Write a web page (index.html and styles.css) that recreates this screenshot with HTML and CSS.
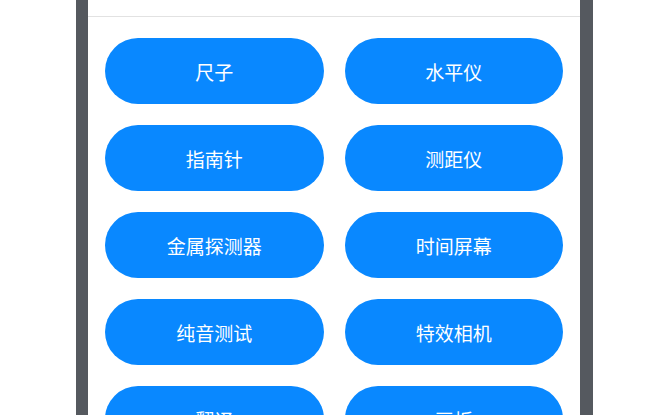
FILE: index.html
```html
<!DOCTYPE html>
<html lang="zh-CN">
    <head>
        <meta charset="UTF-8" />
        <meta name="viewport" content="width=device-width, initial-scale=1.0" />
        <title>工具箱</title>
        <link rel="stylesheet" href="styles.css">
    </head>
    <body>
        <div class="phone">
            <div class="header"></div>
            <div class="toolGrid">
                <button class="toolBtn">尺子</button>
                <button class="toolBtn">水平仪</button>
                <button class="toolBtn">指南针</button>
                <button class="toolBtn">测距仪</button>
                <button class="toolBtn">金属探测器</button>
                <button class="toolBtn">时间屏幕</button>
                <button class="toolBtn">纯音测试</button>
                <button class="toolBtn">特效相机</button>
                <button class="toolBtn">翻译</button>
                <button class="toolBtn">画板</button>
            </div>
        </div>
    </body>
</html>
```

FILE: styles.css
```css
body {
    margin: 0;
    background-color: #fff;
    font-family: "Noto Sans CJK SC", "Noto Sans", sans-serif;
}
.phone {
    width: 492px;
    height: 100vh;
    margin-left: 76px;
    border-left: 12px solid #55595f;
    border-right: 13px solid #55595f;
    background-color: #fff;
    overflow: hidden;
}
.header {
    height: 16px;
    border-bottom: 1px solid #e2e2e2;
}
.toolGrid {
    display: grid;
    grid-template-columns: 1fr 1fr;
    gap: 21px;
    padding: 21px 17px;
}
.toolBtn {
    height: 66px;
    border: none;
    border-radius: 33px;
    background-color: #0988ff;
    color: white;
    font-family: inherit;
    font-size: 19px;
    cursor: pointer;
}
```
